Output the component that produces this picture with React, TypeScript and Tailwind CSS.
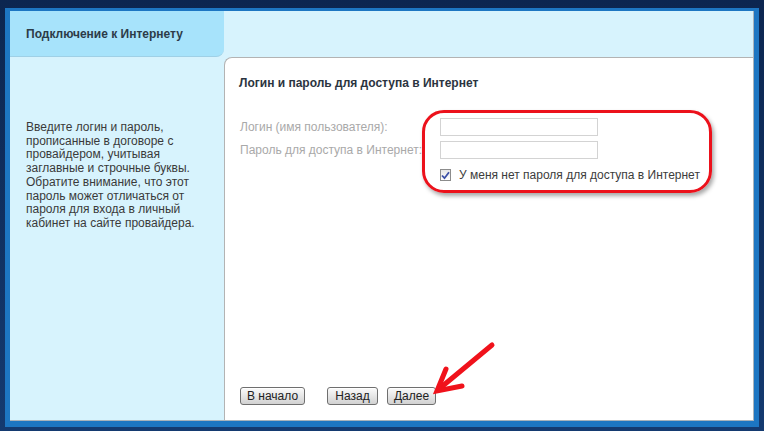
import React from "react";

const font = { fontFamily: '"Liberation Sans", Arial, sans-serif' };

function NavButton({ label, className = "" }: { label: string; className?: string }) {
  return (
    <button
      className={
        "h-[18px] rounded-[3px] border border-[#6f6f6f] bg-gradient-to-b from-[#fbfbfb] to-[#d2d2d2] text-center text-[12px] leading-[16px] text-[#222] shadow-[inset_0_1px_0_#ffffff] " +
        className
      }
    >
      {label}
    </button>
  );
}

export default function App() {
  return (
    <div
      className="relative flex h-[431px] w-[764px] bg-gradient-to-b from-[#0c2650] to-[#143a70] pb-[4px] pl-[5px] pr-[5px] pt-[8px]"
      style={font}
    >
      <div className="flex flex-1 border-b-[6px] border-l-[5px] border-r-[5px] border-t-[3px] border-[#1d76c2]">
        <div className="flex flex-1 border-b border-r border-[#a9b3bb] bg-[#d7f3fd]">
          {/* left column */}
          <div className="flex w-[214px] flex-col">
            <div className="flex h-[46px] items-center rounded-br-[8px] border-b border-[#9fd0e6] bg-[#a7e3fb] pl-[16px] text-[12px] font-bold text-[#2c3b48]">
              Подключение к Интернету
            </div>
            <div className="flex-1 pl-[16px] pt-[64px] text-[12px] leading-[13.7px] text-[#3a3a3a] whitespace-nowrap">
              Введите логин и пароль,
              <br />
              прописанные в договоре с
              <br />
              провайдером, учитывая
              <br />
              заглавные и строчные буквы.
              <br />
              Обратите внимание, что этот
              <br />
              пароль может отличаться от
              <br />
              пароля для входа в личный
              <br />
              кабинет на сайте провайдера.
            </div>
          </div>

          {/* right column */}
          <div className="flex flex-1 flex-col">
            <div className="h-[46px]" />
            <div className="flex flex-1 flex-col rounded-tl-[8px] border-l border-t border-[#b3b3b3] bg-white pb-[15px] pl-[15px] pt-[17px]">
              <div className="-ml-[1px] text-[12px] font-bold leading-[16px] text-[#2b3440]">
                Логин и пароль для доступа в Интернет
              </div>

              <div className="mt-[27px] grid grid-cols-[200px_158px] items-center gap-y-[5px] text-[12px]">
                <div className="text-[#a9a9a9]">Логин (имя пользователя):</div>
                <input className="h-[18px] border border-[#d3d3d3] bg-white outline-none" />
                <div className="whitespace-nowrap text-[#a9a9a9]">Пароль для доступа в Интернет:</div>
                <input className="h-[18px] border border-[#d3d3d3] bg-white outline-none" />
                <div />
                <div className="mt-[2px] flex items-center gap-[8px] whitespace-nowrap text-[#3c3c3c]">
                  <span className="flex h-[12px] w-[12px] items-center justify-center border border-[#8c8c8c] bg-gradient-to-b from-[#e6e6e6] to-[#ffffff]">
                    <svg width="9" height="9" viewBox="0 0 9 9">
                      <path d="M1 4.5 L3.5 7.2 L8 1.2" fill="none" stroke="#3b4fa6" strokeWidth="1.8" />
                    </svg>
                  </span>
                  У меня нет пароля для доступа в Интернет
                </div>
              </div>

              <div className="mt-auto flex items-center">
                <NavButton label="В начало" className="w-[65px]" />
                <NavButton label="Назад" className="ml-[22px] w-[51px]" />
                <NavButton label="Далее" className="ml-[9px] w-[49px]" />
              </div>
            </div>
          </div>
        </div>
      </div>

      {/* red annotation */}
      <div className="pointer-events-none absolute left-[422px] top-[110px] h-[83px] w-[290px] rounded-[22px] border-[3px] border-[#ec111b] shadow-[2px_3px_4px_rgba(0,0,0,0.35)]" />
      <svg className="pointer-events-none absolute left-[430px] top-[340px]" width="70" height="60" viewBox="0 0 70 60">
        <path d="M62 5 L9 49" stroke="#f0121b" strokeWidth="5" strokeLinecap="round" fill="none" />
        <path d="M16 29 L7 51 L32 46" stroke="#f0121b" strokeWidth="5" strokeLinejoin="miter" strokeLinecap="round" fill="none" />
      </svg>
    </div>
  );
}
